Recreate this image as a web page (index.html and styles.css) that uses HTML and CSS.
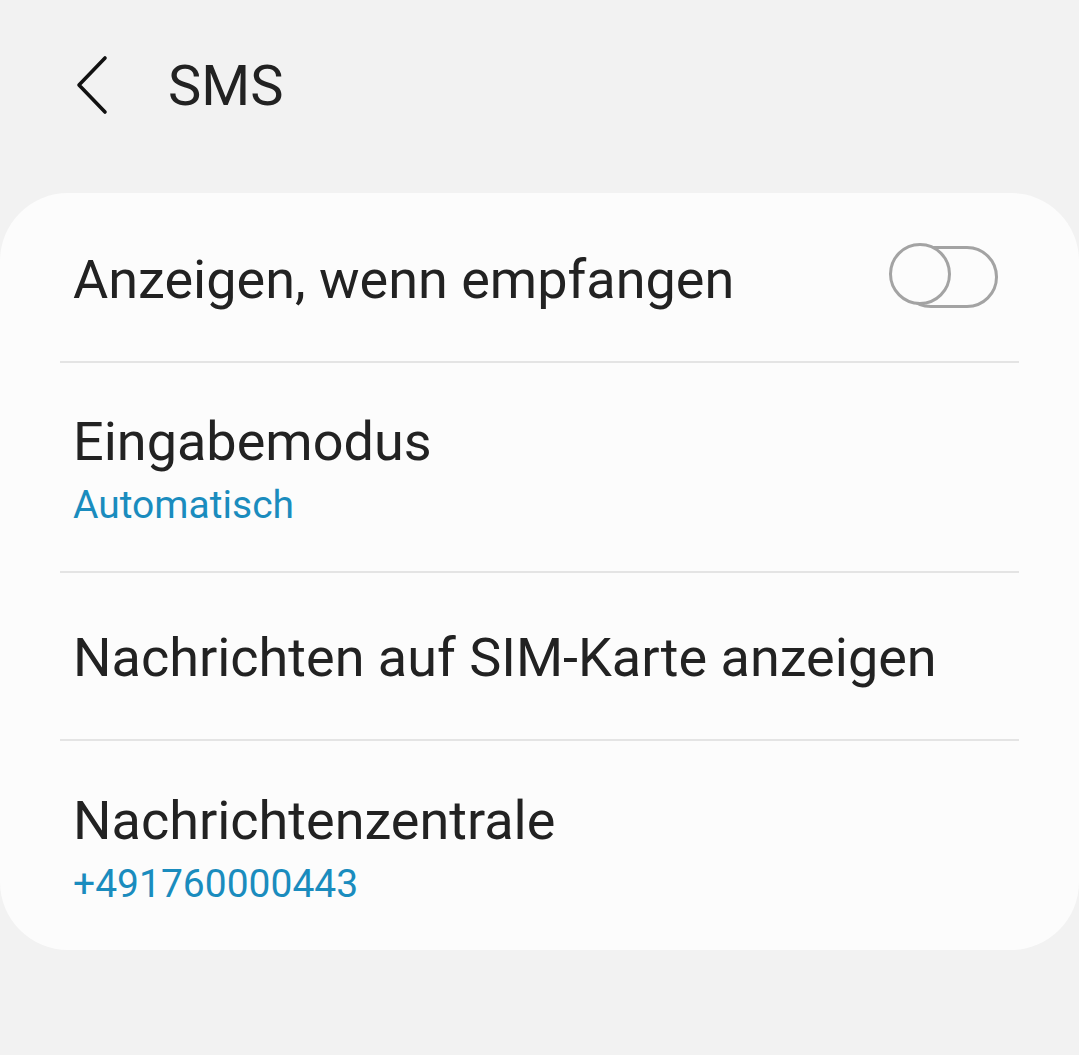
FILE: index.html
```html
<!DOCTYPE html>
<html lang="de">
<head>
    <meta charset="UTF-8">
    <title>SMS</title>
    <link rel="stylesheet" href="styles.css">
</head>
<body>

<div class="header">
    <svg class="back" width="34" height="60" viewBox="0 0 34 60">
        <polyline points="29,3 3,30 29,57" fill="none" stroke="#111" stroke-width="3.6" stroke-linecap="round" stroke-linejoin="round"/>
    </svg>
    <h1 class="title">SMS</h1>
</div>

<div class="card">
    <div class="row row-switch">
        <p class="label">Anzeigen, wenn empfangen</p>
        <div class="switch">
            <div class="knob"></div>
        </div>
    </div>
    <div class="row row-sub">
        <p class="label">Eingabemodus</p>
        <p class="sub">Automatisch</p>
    </div>
    <div class="row row-plain">
        <p class="label">Nachrichten auf SIM-Karte anzeigen</p>
    </div>
    <div class="row row-sub row-last">
        <p class="label">Nachrichtenzentrale</p>
        <p class="sub">+491760000443</p>
    </div>
</div>

</body>
</html>
```

FILE: styles.css
```css
body {
    margin: 0;
    background-color: #f2f2f2;
    font-family: Roboto, "Noto Sans", sans-serif;
    color: #222;
}
p {
    margin: 0;
}
.header {
    height: 170px;
    padding-top: 1px;
    display: flex;
    align-items: center;
    padding-left: 76px;
}
.back {
    display: block;
    margin-top: -3px;
}
.title {
    margin: 0 0 0 58px;
    font-size: 56px;
    font-weight: 400;
    line-height: 64px;
}
.card {
    margin-top: 22px;
    background-color: #fcfcfc;
    border-radius: 68px;
    padding: 0 60px;
}
.row {
    border-bottom: 2px solid #e4e4e4;
    padding-left: 13px;
}
.label {
    font-size: 54px;
    line-height: 64px;
}
.sub {
    font-size: 39px;
    line-height: 46px;
    margin-top: 8px;
    color: #1a8cbe;
}
.row-switch {
    box-sizing: border-box;
    height: 170px;
    padding-top: 5px;
    display: flex;
    align-items: center;
    justify-content: space-between;
    padding-right: 21px;
}
.row-sub {
    padding-top: 47px;
    padding-bottom: 43px;
}
.row-last {
    border-bottom: none;
    padding-top: 48px;
    padding-bottom: 43px;
}
.row-plain {
    box-sizing: border-box;
    height: 168px;
    padding-top: 4px;
    display: flex;
    align-items: center;
}
.switch {
    position: relative;
    width: 92px;
    height: 56px;
    margin-top: -5px;
    border: 3px solid #a3a3a3;
    border-radius: 31px;
}
.knob {
    position: absolute;
    left: -14px;
    top: -6px;
    width: 62px;
    height: 62px;
    box-sizing: border-box;
    border: 3px solid #a3a3a3;
    border-radius: 50%;
    background-color: #fcfcfc;
}
```
